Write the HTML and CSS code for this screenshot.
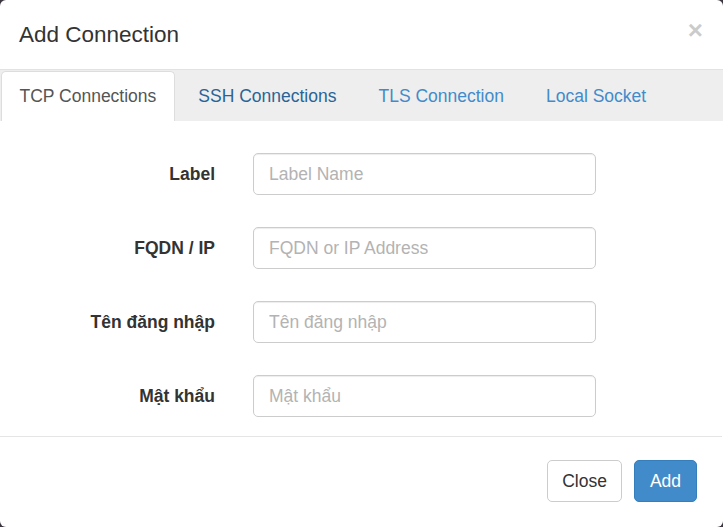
FILE: index.html
```html
<!DOCTYPE html>
<html>
<head>
<meta charset="utf-8">
<link rel="stylesheet" href="styles.css">
</head>
<body>
<div class="modal">
  <div class="modal-header">
    <h4 class="modal-title">Add Connection</h4>
    <button class="close" type="button">×</button>
  </div>
  <ul class="tabs">
    <li class="tab active">TCP Connections</li>
    <li class="tab hover">SSH Connections</li>
    <li class="tab">TLS Connection</li>
    <li class="tab">Local Socket</li>
  </ul>
  <form class="modal-body">
    <div class="row">
      <label class="label">Label</label>
      <input class="input" type="text" placeholder="Label Name">
    </div>
    <div class="row">
      <label class="label">FQDN / IP</label>
      <input class="input" type="text" placeholder="FQDN or IP Address">
    </div>
    <div class="row">
      <label class="label">Tên đăng nhập</label>
      <input class="input" type="text" placeholder="Tên đăng nhập">
    </div>
    <div class="row">
      <label class="label">Mật khẩu</label>
      <input class="input" type="text" placeholder="Mật khẩu">
    </div>
  </form>
  <div class="modal-footer">
    <button class="btn btn-default" type="button">Close</button>
    <button class="btn btn-primary" type="button">Add</button>
  </div>
</div>
</body>
</html>
```
FILE: styles.css
```css
html, body {
  margin: 0;
  padding: 0;
}
body {
  width: 723px;
  height: 527px;
  background: #3b3640;
  font-family: "Liberation Sans", Arial, sans-serif;
  color: #333;
  overflow: hidden;
}
.modal {
  width: 723px;
  height: 527px;
  background: #fff;
  border-radius: 6px;
  display: flex;
  flex-direction: column;
  overflow: hidden;
}
.modal-header {
  height: 69px;
  display: flex;
  align-items: center;
  padding: 2px 20px 0 19px;
  box-sizing: border-box;
}
.modal-title {
  margin: 0;
  font-size: 22.5px;
  font-weight: normal;
  color: #333;
  line-height: 1.1;
}
.close {
  margin-left: auto;
  margin-top: -12px;
  border: 0;
  background: none;
  padding: 0;
  font-family: "Liberation Sans", Arial, sans-serif;
  font-size: 26px;
  font-weight: bold;
  line-height: 1;
  color: #000;
  opacity: 0.2;
}
.tabs {
  list-style: none;
  margin: 0;
  padding: 1px 0 0 1px;
  height: 52px;
  box-sizing: border-box;
  display: flex;
  gap: 5px;
  background: #eee;
  border-top: 1px solid #e2e2e2;
}
.tab {
  padding: 0 17.5px;
  display: flex;
  align-items: center;
  font-size: 17.5px;
  color: #428bca;
  border: 1px solid transparent;
  border-bottom: 0;
  border-radius: 5px 5px 0 0;
}
.tab.hover {
  color: #2a6496;
}
.tab.active {
  background: #fff;
  color: #555;
  border-color: #ddd;
}
.modal-body {
  flex: 1;
  margin: 0;
  padding: 32px 0 0 0;
  display: flex;
  flex-direction: column;
  gap: 32px;
}
.row {
  display: flex;
  align-items: center;
  height: 42px;
}
.label {
  width: 215px;
  text-align: right;
  font-weight: bold;
  font-size: 17.5px;
  color: #333;
  padding-right: 38px;
  box-sizing: content-box;
}
.input {
  width: 343px;
  height: 42px;
  box-sizing: border-box;
  border: 1px solid #ccc;
  border-radius: 5px;
  padding: 0 15px;
  font-family: "Liberation Sans", Arial, sans-serif;
  font-size: 17.5px;
  color: #555;
  box-shadow: inset 0 1px 1px rgba(0,0,0,0.075);
  outline: none;
}
.input::placeholder {
  color: #b3b3b3;
}
.modal-footer {
  border-top: 1px solid #e5e5e5;
  margin-right: 1px;
  height: 91px;
  box-sizing: border-box;
  display: flex;
  justify-content: flex-end;
  align-items: flex-start;
  gap: 12px;
  padding: 23px 25px 0 0;
}
.btn {
  height: 42px;
  box-sizing: border-box;
  border-radius: 5px;
  font-family: "Liberation Sans", Arial, sans-serif;
  font-size: 17.5px;
  padding: 0 12px;
  border: 1px solid #ccc;
}
.btn-default {
  width: 75px;
  background: #fff;
  color: #333;
}
.btn-primary {
  width: 63px;
  background: #428bca;
  border-color: #357ebd;
  color: #fff;
}
```
